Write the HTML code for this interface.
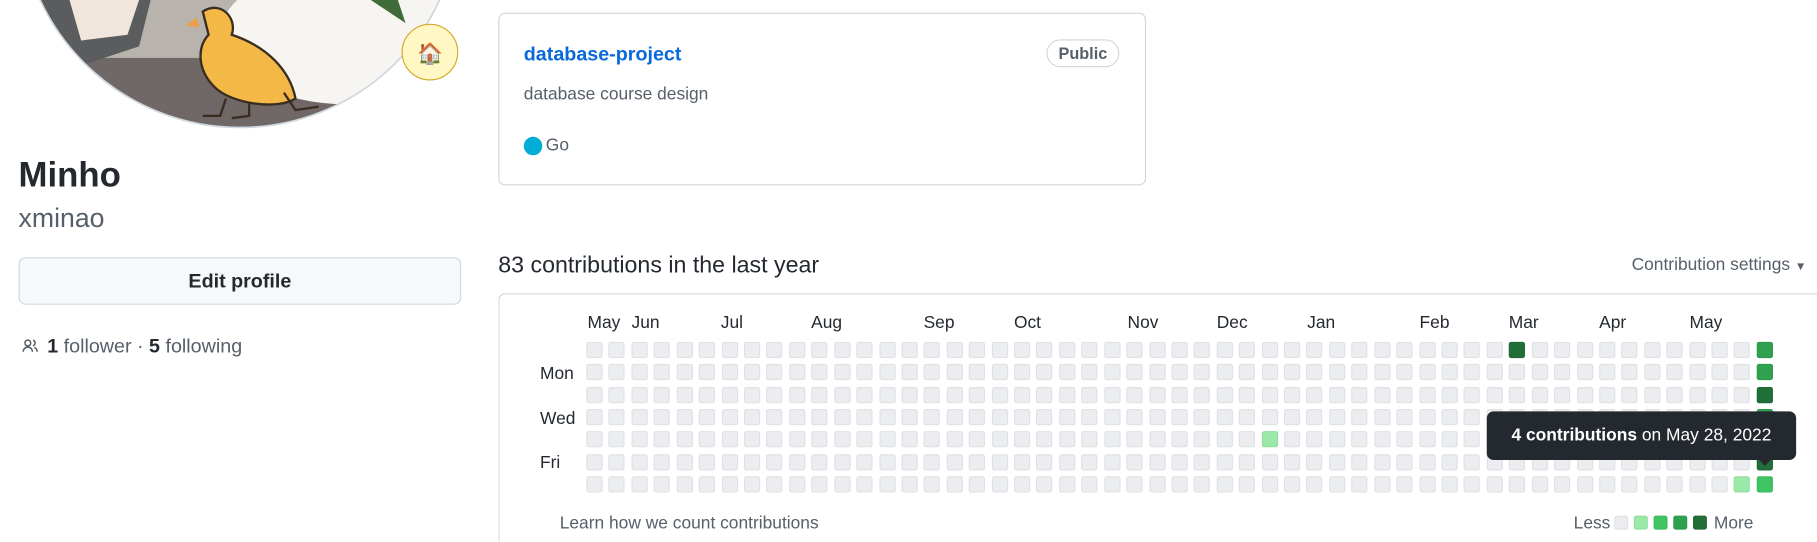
<!DOCTYPE html>
<html><head><meta charset="utf-8"><style>
html,body{margin:0;padding:0;background:#fff;overflow:hidden;width:1817px;height:542px}
#w{position:absolute;left:0;top:0;width:1568px;height:467px;overflow:hidden;transform:scale(1.15880);transform-origin:0 0;font-family:"Liberation Sans","DejaVu Sans",sans-serif;color:#24292f}
.a{position:absolute;white-space:nowrap}
.cell{position:absolute;width:14px;height:14px;border-radius:2px;background:#ebedf0;outline:1px solid rgba(27,31,36,0.06);outline-offset:-1px}
</style></head><body><div id="w">
<svg class="a" style="left:0;top:0" width="420" height="120">
<defs><clipPath id="c"><circle cx="207" cy="-80" r="190"/></clipPath></defs>
<g clip-path="url(#c)">
<rect x="0" y="-300" width="420" height="420" fill="#8f8b8a"/>
<rect x="0" y="-10" width="420" height="60" fill="#b9b3ae"/>
<rect x="0" y="50" width="420" height="80" fill="#6f6866"/>
<path d="M20 0 L130 0 L120 40 L60 60 L20 40Z" fill="#5a5c5e"/>
<path d="M60 0 L120 0 L110 30 L70 35Z" fill="#f1e6dc"/>
<ellipse cx="300" cy="30" rx="110" ry="60" fill="#f7f5f2"/>
<path d="M320 0 L350 20 L340 -10Z" fill="#3f6b3a"/>
<path d="M175 10 C190 0 205 15 200 30 C230 40 250 60 255 85 C240 95 200 90 185 75 C170 60 170 40 180 30 Z" fill="#f3b845" stroke="#3a2c20" stroke-width="2"/>
<path d="M170 15 L160 22 L172 24Z" fill="#e8a04a"/>
<path d="M195 85 L190 100 L175 100 M215 88 L215 100 L200 102 M245 80 L255 95 L275 92" stroke="#3a2c20" stroke-width="2" fill="none"/>
</g>
<circle cx="207" cy="-80" r="190" fill="none" stroke="#d0d7de" stroke-width="1.5"/>
<circle cx="371" cy="45" r="24" fill="#fff8c5" stroke="#d4a72c" stroke-width="1"/>
<text x="371" y="52" text-anchor="middle" font-size="18" font-family="DejaVu Sans, sans-serif">🏠</text>
</svg>
<div class="a" style="left:16px;top:134px;font-size:30px;font-weight:600;line-height:36px">Minho</div>
<div class="a" style="left:16px;top:174px;font-size:23px;font-weight:300;color:#57606a;line-height:28px">xminao</div>
<div class="a" style="left:16px;top:222px;width:382px;height:41px;box-sizing:border-box;background:#f6f8fa;border:1px solid #d0d7de;border-radius:6px;text-align:center;font-size:17px;font-weight:600;line-height:39px">Edit profile</div>
<div class="a" style="left:16px;top:288px;font-size:17px;color:#57606a;line-height:22px"><svg width="20" height="16" viewBox="0 0 16 16" style="vertical-align:-2px"><path d="M2 13.5c0-2.2 1.8-4 4-4s4 1.8 4 4M6 8.5a2.5 2.5 0 1 0 0-5 2.5 2.5 0 0 0 0 5M10.5 3.6a2.5 2.5 0 0 1 0 4.8M11.5 9.8c1.5.5 2.5 1.9 2.5 3.7" stroke="#57606a" stroke-width="1.3" fill="none"/></svg> <b style="color:#24292f;font-weight:600">1</b> follower · <b style="color:#24292f;font-weight:600">5</b> following</div>
<div class="a" style="left:430px;top:11px;width:559px;height:149px;box-sizing:border-box;border:1px solid #d0d7de;border-radius:6px"></div>
<div class="a" style="left:452px;top:36px;font-size:17px;font-weight:600;color:#0969da;line-height:22px">database-project</div>
<div class="a" style="left:903px;top:34px;width:63px;height:24px;box-sizing:border-box;border:1px solid #d0d7de;border-radius:12px;font-size:14px;font-weight:600;color:#57606a;text-align:center;line-height:22px">Public</div>
<div class="a" style="left:452px;top:72px;font-size:15px;color:#57606a;line-height:20px">database course design</div>
<div class="a" style="left:452px;top:118px;width:16px;height:16px;border-radius:50%;background:#00add8"></div>
<div class="a" style="left:471px;top:116px;font-size:15px;color:#57606a;line-height:20px">Go</div>
<div class="a" style="left:430px;top:216px;font-size:20px;line-height:26px">83 contributions in the last year</div>
<div class="a" style="left:1408px;top:219px;font-size:15px;color:#57606a;line-height:20px">Contribution settings <span style="font-size:10px">▼</span></div>
<div class="a" style="left:430px;top:253px;width:1138px;height:214px;box-sizing:border-box;border:1px solid #d0d7de;border-bottom:none;border-right:none;border-radius:6px 0 0 0"></div>
<div id="g"></div>
<div class="a" style="left:466px;top:314px;font-size:15px;line-height:18px">Mon</div>
<div class="a" style="left:466px;top:353px;font-size:15px;line-height:18px">Wed</div>
<div class="a" style="left:466px;top:391px;font-size:15px;line-height:18px">Fri</div>
<div class="a" style="left:483px;top:443px;font-size:15px;color:#57606a;line-height:18px">Learn how we count contributions</div>
<div class="a" style="left:1358px;top:443px;font-size:15px;color:#57606a;line-height:18px">Less</div>
<div class="cell" style="left:1393px;top:445px;width:12px;height:12px"></div>
<div class="cell" style="left:1410px;top:445px;width:12px;height:12px;background:#9be9a8"></div>
<div class="cell" style="left:1427px;top:445px;width:12px;height:12px;background:#40c463"></div>
<div class="cell" style="left:1444px;top:445px;width:12px;height:12px;background:#30a14e"></div>
<div class="cell" style="left:1461px;top:445px;width:12px;height:12px;background:#216e39"></div>
<div class="a" style="left:1479px;top:443px;font-size:15px;color:#57606a;line-height:18px">More</div>
<div class="a" id="tt" style="left:1283px;top:355px;width:267px;height:42px;background:#24292f;border-radius:6px;color:#fff;font-size:15px;line-height:42px;text-align:center;z-index:5"><b>4 contributions</b> on May 28, 2022</div>
<div class="a" style="left:1517px;top:396px;width:0;height:0;border-left:6px solid transparent;border-right:6px solid transparent;border-top:6px solid #24292f;z-index:5"></div>
</div>
<script>
var g=document.getElementById('g'),h='';
var months=[['May',507],['Jun',545],['Jul',622],['Aug',700],['Sep',797],['Oct',875],['Nov',973],['Dec',1050],['Jan',1128],['Feb',1225],['Mar',1302],['Apr',1380],['May',1458]];
months.forEach(function(m){h+='<div class="a" style="left:'+m[1]+'px;top:270px;font-size:15px;line-height:18px">'+m[0]+'</div>';});
var sp={'41,0':'#216e39','30,4':'#9be9a8','52,0':'#30a14e','52,1':'#30a14e','52,2':'#216e39','52,3':'#30a14e','52,4':'#216e39','52,5':'#216e39','52,6':'#40c463','51,6':'#9be9a8'};
for(var c=0;c<53;c++)for(var r=0;r<7;r++){var x=506+c*19.42,y=295+r*19.35;var col=sp[c+','+r];
h+='<div class="cell" style="left:'+x.toFixed(1)+'px;top:'+y.toFixed(1)+'px'+(col?';background:'+col:'')+'"></div>';}
g.innerHTML=h;
</script>
</body></html>
